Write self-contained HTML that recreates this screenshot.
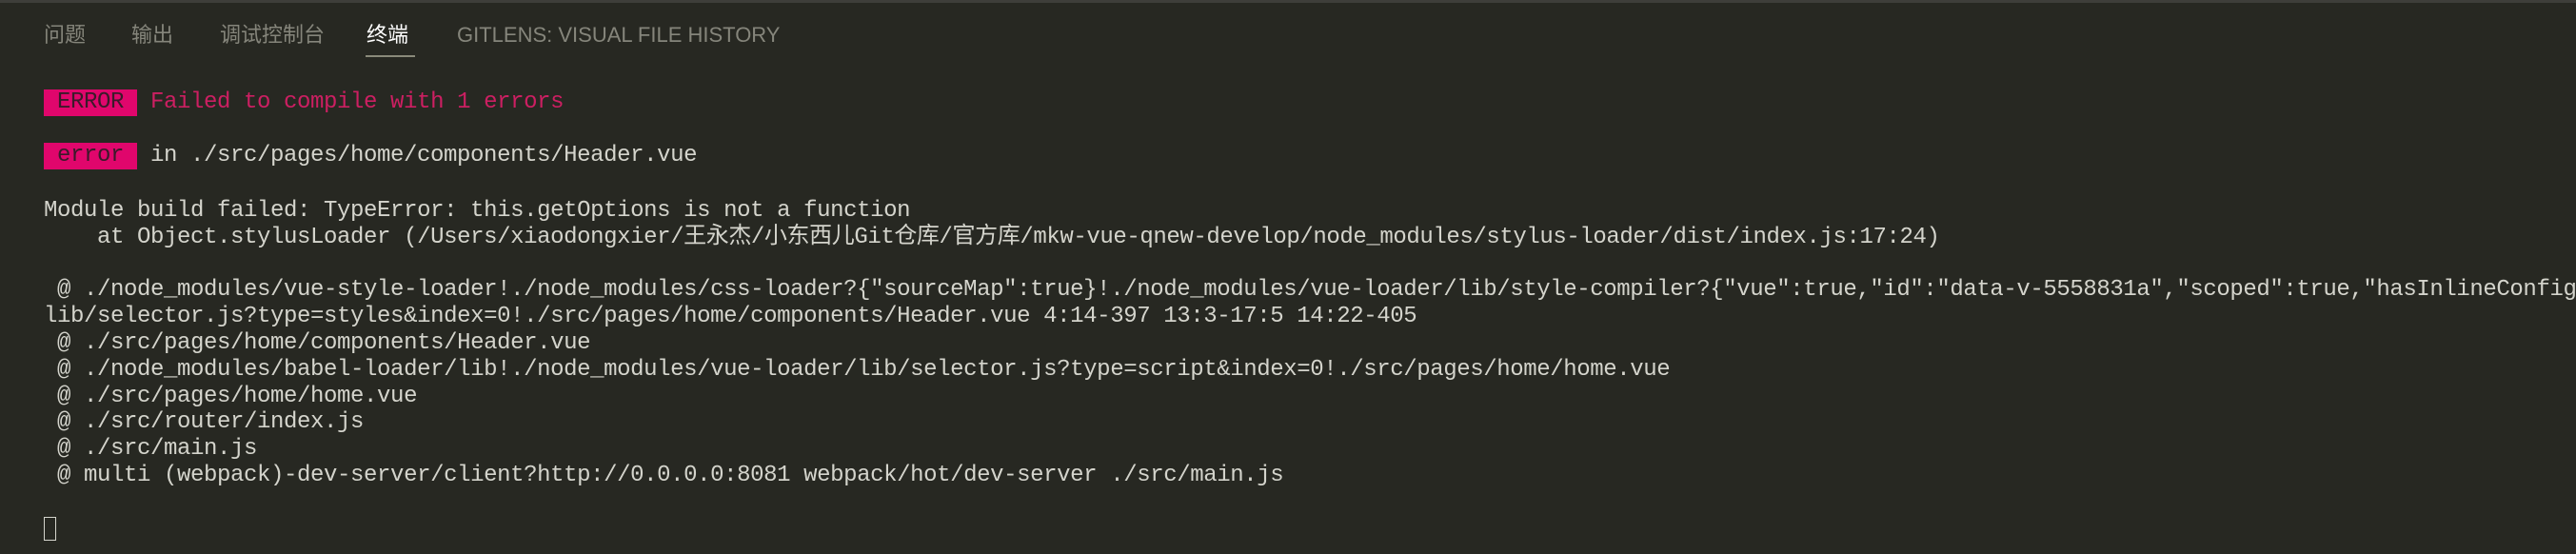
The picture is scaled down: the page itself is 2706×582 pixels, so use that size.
<!DOCTYPE html>
<html><head><meta charset="utf-8"><style>
body{margin:0;width:2706px;height:582px;background:#272822;overflow:hidden;position:relative;font-family:"Liberation Sans","Noto Sans CJK SC",sans-serif}
.top{position:absolute;left:0;top:0;width:2706px;height:3px;background:#3e3e3a}
.tab{position:absolute;top:22px;font-size:22px;color:#85857b;line-height:30px;white-space:nowrap}
.ul{position:absolute;left:384px;top:58px;width:52px;height:2px;background:#8a8a7a}
.t{position:absolute;left:46px;font-family:"Liberation Mono","Noto Sans CJK SC",monospace;font-size:24px;letter-spacing:-0.4px;color:#d4d4cc;white-space:pre;line-height:27.8px}
.b{background:#e0066c;color:#3a1a2a;display:inline-block;width:98px;text-align:center;height:28px;line-height:28px}
.cur{position:absolute;left:46px;top:543px;width:11px;height:23px;border:1.5px solid #d4d4cc}
</style></head><body>
<div class="top"></div>
<div class="tab" style="left:46px">问题</div>
<div class="tab" style="left:138px">输出</div>
<div class="tab" style="left:231px">调试控制台</div>
<div class="tab" style="left:385px;color:#fff">终端</div>
<div class="tab" style="left:480px">GITLENS: VISUAL FILE HISTORY</div>
<div class="ul"></div>
<div class="t" style="top:94px"><span class="b">ERROR</span> <span style="color:#cc1f62">Failed to compile with 1 errors</span></div>
<div class="t" style="top:150px"><span class="b">error</span> in ./src/pages/home/components/Header.vue</div>
<div class="t" style="top:208px">Module build failed: TypeError: this.getOptions is not a function
    at Object.stylusLoader (/Users/xiaodongxier/王永杰/小东西儿Git仓库/官方库/mkw-vue-qnew-develop/node_modules/stylus-loader/dist/index.js:17:24)

 @ ./node_modules/vue-style-loader!./node_modules/css-loader?{"sourceMap":true}!./node_modules/vue-loader/lib/style-compiler?{"vue":true,"id":"data-v-5558831a","scoped":true,"hasInlineConfig
lib/selector.js?type=styles&amp;index=0!./src/pages/home/components/Header.vue 4:14-397 13:3-17:5 14:22-405
 @ ./src/pages/home/components/Header.vue
 @ ./node_modules/babel-loader/lib!./node_modules/vue-loader/lib/selector.js?type=script&amp;index=0!./src/pages/home/home.vue
 @ ./src/pages/home/home.vue
 @ ./src/router/index.js
 @ ./src/main.js
 @ multi (webpack)-dev-server/client?http://0.0.0.0:8081 webpack/hot/dev-server ./src/main.js</div>
<div class="cur"></div>
</body></html>
